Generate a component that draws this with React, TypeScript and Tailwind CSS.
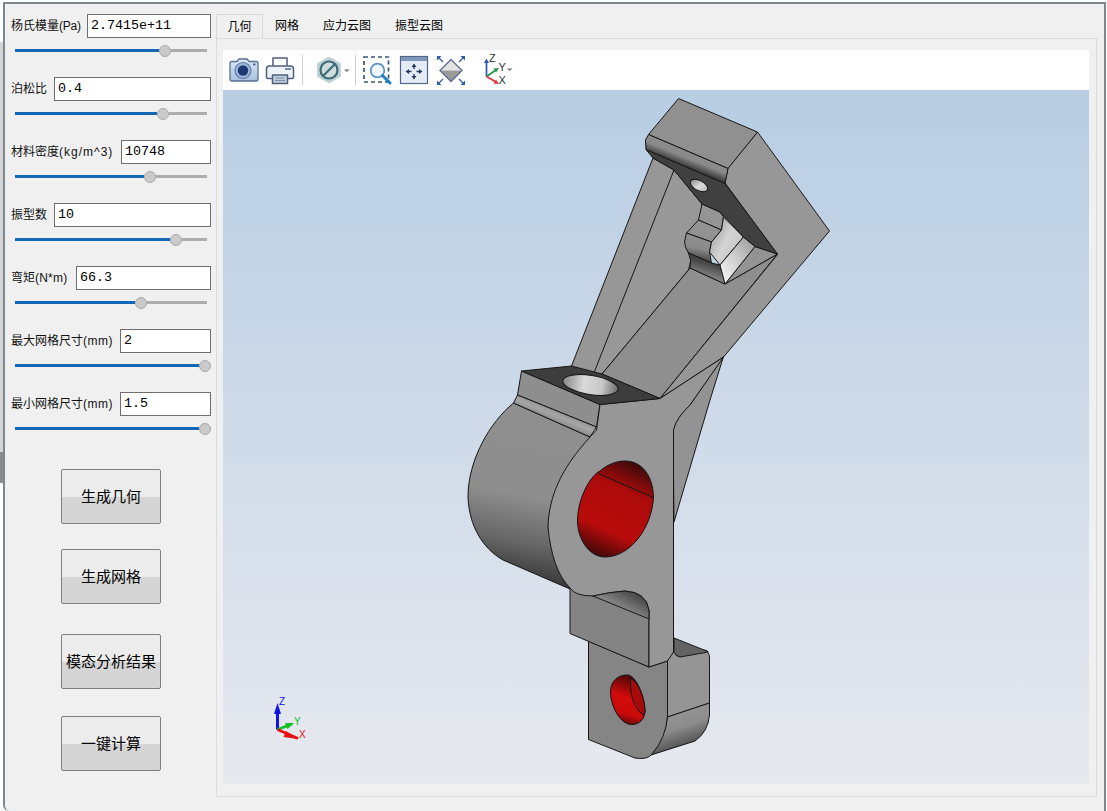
import React from "react";

const CJK = "font-['Liberation_Sans','Noto_Sans_CJK_SC',sans-serif]";

const params = [
  { label: "杨氏模量", unit: "(Pa)", unitCls: "tracking-[-0.2px]", value: "2.7415e+11", labelW: "w-[76px]", pos: 150 },
  { label: "泊松比", unit: "", unitCls: "", value: "0.4", labelW: "w-[43px]", pos: 147.5 },
  { label: "材料密度", unit: "(kg/m^3)", unitCls: "tracking-[1px]", value: "10748", labelW: "w-[110px]", pos: 135 },
  { label: "振型数", unit: "", unitCls: "", value: "10", labelW: "w-[43px]", pos: 161 },
  { label: "弯矩", unit: "(N*m)", unitCls: "tracking-[0.2px]", value: "66.3", labelW: "w-[65px]", pos: 126 },
  { label: "最大网格尺寸", unit: "(mm)", unitCls: "tracking-[0.5px]", value: "2", labelW: "w-[109px]", pos: 190 },
  { label: "最小网格尺寸", unit: "(mm)", unitCls: "tracking-[0.5px]", value: "1.5", labelW: "w-[109px]", pos: 190 },
];

function Param({ label, unit, unitCls, value, labelW, pos }: { label: string; unit: string; unitCls: string; value: string; labelW: string; pos: number }) {
  return (
    <div className="h-[63px]">
      <div className="flex h-6 items-center">
        <span className={`${labelW} shrink-0 whitespace-nowrap text-[12px] leading-none text-[#111] ${CJK}`}>
          {label}
          <span className={unitCls}>{unit}</span>
        </span>
        <div className="flex h-6 flex-1 items-center border border-[#6f6f6f] bg-white pl-[3px] font-['Liberation_Mono',monospace] text-[13.33px] text-black">
          {value}
        </div>
      </div>
      <div className="ml-1 mt-[6px] flex h-[13px] items-center">
        <div className="h-[3px] shrink-0 bg-[#1268b5]" style={{ width: pos - 6 }} />
        <div className="h-3 w-3 shrink-0 rounded-full border border-[#a9a9a9] bg-[#cacaca]" />
        <div className="h-[3px] shrink-0 bg-[#adadad]" style={{ width: Math.max(0, 186 - pos) }} />
      </div>
    </div>
  );
}

function Btn({ text, cls }: { text: string; cls: string }) {
  return (
    <div
      className={`${cls} ml-[56px] flex h-[55px] w-[100px] items-center justify-center rounded-[2px] border border-[#7e7e7e] bg-[linear-gradient(#ececec_0%,#ececec_50%,#d5d5d5_52%,#d5d5d5_100%)] pt-px text-[15px] text-black ${CJK}`}
    >
      {text}
    </div>
  );
}

function Camera() {
  return (
    <svg width="30" height="30" viewBox="0 0 30 30" className="ml-[6px] shrink-0">
      <defs>
        <linearGradient id="cam" x1="0" y1="0" x2="0" y2="1">
          <stop offset="0" stopColor="#dde8f5" />
          <stop offset="1" stopColor="#a9c2df" />
        </linearGradient>
      </defs>
      <path d="M1 8.500Q1 6.500 3 6.500H8L10 4H18L20 6.500H27Q29 6.500 29 8.500V24Q29 26 27 26H3Q1 26 1 24Z" fill="url(#cam)" stroke="#5a6f94" strokeWidth="1.300" />
      <circle cx="14" cy="15.500" r="8" fill="#9db8d8" stroke="#5f7ba6" strokeWidth="1.200" />
      <circle cx="14" cy="15.500" r="5.200" fill="#1d3a70" />
      <rect x="24" y="8.500" width="2.500" height="1.800" fill="#44618f" />
    </svg>
  );
}

function Printer() {
  return (
    <svg width="30" height="30" viewBox="0 0 30 30" className="ml-[6px] shrink-0">
      <path d="M8 12V3H22V12" fill="#fff" stroke="#4e5f7e" strokeWidth="1.500" />
      <path d="M4.500 11H25.500Q28.500 11 28.500 14V22Q28.500 23.500 27 23.500H3Q1.500 23.500 1.500 22V14Q1.500 11 4.500 11Z" fill="#eef3f9" stroke="#4e5f7e" strokeWidth="1.500" />
      <rect x="20" y="13" width="6" height="2" fill="#7a8ca8" />
      <rect x="7.500" y="20" width="15" height="8.500" fill="#c3cedd" stroke="#4e5f7e" strokeWidth="1.500" />
      <path d="M10 23H20M10 25.500H20" stroke="#7f8fa8" strokeWidth="1" />
    </svg>
  );
}

function NoEntry() {
  return (
    <svg width="35" height="30" viewBox="0 0 35 30" className="ml-3 shrink-0">
      <path d="M14 2L25.500 8.500V21.500L14 28L2.500 21.500V8.500Z" fill="#b9ced2" stroke="#c9d8da" strokeWidth="1" />
      <circle cx="14" cy="15" r="8.500" fill="#cfdcde" stroke="#3c6a76" strokeWidth="2.200" />
      <path d="M8 21L20 9" stroke="#3c6a76" strokeWidth="2.200" />
      <path d="M29 14.500H34.500L31.750 17Z" fill="#777" />
    </svg>
  );
}

function ZoomBox() {
  return (
    <svg width="30" height="30" viewBox="0 0 30 30" className="ml-[7px] shrink-0">
      <rect x="1" y="2" width="24.500" height="25" fill="none" stroke="#3d5578" strokeWidth="1.700" strokeDasharray="4 3" />
      <circle cx="14.500" cy="15.500" r="6.800" fill="#eef5fb" stroke="#5c93c4" strokeWidth="1.800" />
      <path d="M19.500 20.500L27 28" stroke="#1f7fc4" strokeWidth="3" strokeLinecap="round" />
    </svg>
  );
}

function FitAll() {
  return (
    <svg width="30" height="30" viewBox="0 0 30 30" className="ml-[6px] shrink-0">
      <rect x="1.500" y="1.500" width="27" height="27" fill="#e3ebf4" stroke="#4f658a" strokeWidth="1.200" />
      <rect x="2" y="2" width="26" height="4" fill="#7f97b8" />
      <path d="M15 11.500V14M15 19V21.500M9.500 16.500H12.500M17.500 16.500H20.500" stroke="#233a62" strokeWidth="1.400" />
      <path d="M15 8.500L12.500 12H17.500ZM15 24.500L12.500 21H17.500ZM6.500 16.500L10 14V19ZM23.500 16.500L20 14V19Z" fill="#233a62" />
    </svg>
  );
}

function Diamond() {
  return (
    <svg width="30" height="30" viewBox="0 0 30 30" className="ml-[7px] shrink-0">
      <path d="M15 4.500L26 15.500H4Z" fill="#e2e2e2" />
      <path d="M4 15.500H26L15 26.500Z" fill="#9b9b9b" />
      <path d="M15 4.500L26 15.500L15 26.500L4 15.500Z" fill="none" stroke="#5c6d8c" strokeWidth="1.300" />
      <path d="M2 2L7 7M28 2L23 7M2 29L7 24M28 29L23 24" stroke="#2f5f9e" strokeWidth="1.300" />
      <path d="M1 1H5.500L1 5.500ZM29 1H24.500L29 5.500ZM1 30H5.500L1 25.500ZM29 30H24.500L29 25.500Z" fill="#2f5f9e" />
    </svg>
  );
}

function Axes() {
  return (
    <svg width="36" height="34" viewBox="0 0 36 34" className="ml-4 shrink-0">
      <path d="M4.500 23.500V9" stroke="#2a56b8" strokeWidth="1.700" />
      <path d="M4.500 5.500L2 10H7Z" fill="#2a56b8" />
      <path d="M4.500 23.500L14 17" stroke="#1f9a4a" strokeWidth="1.700" />
      <path d="M17 15L11.500 15.500L14 19.500Z" fill="#1f9a4a" />
      <path d="M4.500 23.500L14 29" stroke="#e0353a" strokeWidth="1.700" />
      <path d="M17 31L11.500 30.500L14 26.500Z" fill="#e0353a" />
      <text x="7" y="9" fontSize="11" fill="#333" fontFamily="Liberation Sans">Z</text>
      <text x="16.500" y="18" fontSize="11" fill="#333" fontFamily="Liberation Sans">Y</text>
      <text x="16.500" y="31" fontSize="11" fill="#333" fontFamily="Liberation Sans">X</text>
      <path d="M25 15.500H30.500L27.750 18Z" fill="#777" />
    </svg>
  );
}

function Model() {
  const e = { stroke: "#161616", strokeWidth: 1, strokeLinejoin: "round" as const };
  return (
    <svg viewBox="223 90 866 694" width="866" height="694" className="block">
      <defs>
        <linearGradient id="cyl" gradientUnits="userSpaceOnUse" x1="505" y1="425" x2="475" y2="578">
          <stop offset="0" stopColor="#8f8f8f" />
          <stop offset="0.42" stopColor="#8e8e8e" />
          <stop offset="0.72" stopColor="#666" />
          <stop offset="1" stopColor="#2e2e2e" />
        </linearGradient>
        <linearGradient id="band" gradientUnits="userSpaceOnUse" x1="654" y1="136" x2="648" y2="151">
          <stop offset="0" stopColor="#8c8c8c" />
          <stop offset="0.5" stopColor="#8a8a8a" />
          <stop offset="1" stopColor="#3e3e3e" />
        </linearGradient>
        <linearGradient id="fillet" gradientUnits="userSpaceOnUse" x1="526" y1="396" x2="521" y2="408">
          <stop offset="0" stopColor="#8e8e8e" />
          <stop offset="0.5" stopColor="#a6a6a6" />
          <stop offset="1" stopColor="#8c8c8c" />
        </linearGradient>
        <linearGradient id="holeBig" gradientUnits="userSpaceOnUse" x1="640" y1="462" x2="595" y2="560">
          <stop offset="0" stopColor="#300a0a" />
          <stop offset="0.3" stopColor="#ad0b0b" />
          <stop offset="0.7" stopColor="#b90b0b" />
          <stop offset="1" stopColor="#2c0808" />
        </linearGradient>
        <linearGradient id="holeSmall" gradientUnits="userSpaceOnUse" x1="635" y1="675" x2="620" y2="726">
          <stop offset="0" stopColor="#3d0808" />
          <stop offset="0.45" stopColor="#d50a0a" />
          <stop offset="0.75" stopColor="#c90a0a" />
          <stop offset="1" stopColor="#3a0808" />
        </linearGradient>
        <linearGradient id="tail" gradientUnits="userSpaceOnUse" x1="680" y1="705" x2="695" y2="750">
          <stop offset="0" stopColor="#979797" />
          <stop offset="0.45" stopColor="#8c8c8c" />
          <stop offset="1" stopColor="#3d3d3d" />
        </linearGradient>
        <linearGradient id="notch" gradientUnits="userSpaceOnUse" x1="630" y1="590" x2="618" y2="612">
          <stop offset="0" stopColor="#454545" />
          <stop offset="1" stopColor="#969696" />
        </linearGradient>
        <linearGradient id="hole1" gradientUnits="userSpaceOnUse" x1="565" y1="385" x2="618" y2="385">
          <stop offset="0" stopColor="#8f8f8f" />
          <stop offset="0.35" stopColor="#d9d9d9" />
          <stop offset="0.7" stopColor="#c8c8c8" />
          <stop offset="1" stopColor="#6b6b6b" />
        </linearGradient>
        <linearGradient id="hole2" gradientUnits="userSpaceOnUse" x1="690" y1="182" x2="708" y2="192">
          <stop offset="0" stopColor="#888" />
          <stop offset="0.5" stopColor="#dcdcdc" />
          <stop offset="1" stopColor="#aaa" />
        </linearGradient>
        <linearGradient id="lite" gradientUnits="userSpaceOnUse" x1="708" y1="240" x2="738" y2="255">
          <stop offset="0" stopColor="#a8a8a8" />
          <stop offset="0.5" stopColor="#d4d4d4" />
          <stop offset="1" stopColor="#c4c4c4" />
        </linearGradient>
        <linearGradient id="lite2" gradientUnits="userSpaceOnUse" x1="722" y1="270" x2="752" y2="250">
          <stop offset="0" stopColor="#ececec" />
          <stop offset="0.55" stopColor="#cacaca" />
          <stop offset="1" stopColor="#a8a8a8" />
        </linearGradient>
        <linearGradient id="blk" gradientUnits="userSpaceOnUse" x1="695" y1="235" x2="690" y2="260">
          <stop offset="0" stopColor="#8f8f8f" />
          <stop offset="0.5" stopColor="#8a8a8a" />
          <stop offset="1" stopColor="#3c3c3c" />
        </linearGradient>
        <linearGradient id="blk2" gradientUnits="userSpaceOnUse" x1="705" y1="262" x2="700" y2="280">
          <stop offset="0" stopColor="#444" />
          <stop offset="1" stopColor="#999" />
        </linearGradient>
      </defs>

      {/* right rib behind main body */}
      <path d="M723.500 356.500L710 400L674 522L673 430Q676 418 690 405Z" fill="#939393" {...e} />

      {/* tail block */}
      <path d="M667 661L673 650L680 656L704 650Q709 651 709.500 657V703L667.500 717Z" fill="#959595" {...e} />
      <path d="M674 638L704 650Q709 651 708 652L680 657Q675 656 674 652Z" fill="#636363" {...e} />
      <path d="M667.500 717L709.500 703V715Q708 732 695 741L651 755Q664 740 667.500 717Z" fill="url(#tail)" {...e} />
      <path d="M588.500 641V739.500L635 758Q648 760 652 754Q666 738 667.500 716V661L649 667Z" fill="#858585" {...e} />
      <path d="M627 675C635 674 645 695 645 712C644 722 636 726 628 724C617 720 610 702 610.500 691C611 680 619 675 627 675Z" fill="url(#holeSmall)" {...e} />
      <path d="M630.500 678C640 684 645 700 645 712L643.500 715C633 708 630 695 630.500 678Z" fill="#a80909" {...e} />

      {/* under block */}
      <path d="M570 586V633.500L649 667V610L593 596Z" fill="#848484" {...e} />

      {/* cylinder */}
      <path d="M513.500 403C490 422 468 460 468 497C469 525 482 548 503 560L570 589L548 527L590 437Z" fill="url(#cyl)" {...e} />

      {/* top band */}
      <path d="M521.500 371L517.500 395L596.500 427L600 404.500Z" fill="#8e8e8e" {...e} />
      <path d="M517.500 395L513.500 403L590 437L596.500 427Z" fill="url(#fillet)" {...e} />

      {/* upper arm: ribs */}
      <path d="M653 158L571.500 366L600 404L674 170Z" fill="#979797" {...e} />
      <path d="M674 170L593.500 374L602 374L688.500 270L692 256L685 242L702 215L702 204Z" fill="#989898" {...e} />
      <path d="M602 374L660 398.500L777.500 254L725 284L690 268L688.500 270Z" fill="#8f8f8f" {...e} />
      <path d="M725 284L755 246.500L777.500 254Z" fill="#939393" {...e} />

      {/* right face */}
      <path d="M757.500 132L829.500 231L723.500 357L660 398.500L777.500 254.500L725 183L728 168Z" fill="#979797" {...e} />

      {/* main front face */}
      <path d="M600 404.500L660 398.500L723.500 357L690 405Q676 418 673.500 430V652L667.500 661L649 667V610Q646 592 625 591Q610 592 593 596Q575 596 570 588Q552 570 548 527C549 495 562 470 583 445L590 437L596.500 430Z" fill="#979797" {...e} />
      <path d="M593 596Q610 592 625 591Q646 592 649 610V619Z" fill="url(#notch)" {...e} />
      <path d="M673.500 430V652" fill="none" {...e} />

      {/* big hole */}
      <path d="M625 461C642 461 653 476 653.500 497C652 528 630 557 605 557C588 557 577 537 577.500 520C578 498 590 476 600 471C608 464 617 461 625 461Z" fill="url(#holeBig)" {...e} />
      <path d="M598.500 473.500L653.500 497.500" fill="none" {...e} />

      {/* pocket */}
      <path d="M702 204L698.500 220L721.500 230L723.500 217L720 212Z" fill="#959595" {...e} />
      <path d="M698.500 220L686.500 233L711.500 242L721.500 230Z" fill="#929292" {...e} />
      <path d="M686.500 233L684.500 242Q685 248 688.500 253L711.500 263L709.500 252L711.500 242Z" fill="url(#blk)" {...e} />
      <path d="M688.500 253Q692 260 690 268L725 284Q723 272 720 265L711.500 263Z" fill="url(#blk2)" {...e} />
      <path d="M721.500 230L711.500 242L709.500 252L720 265L743.500 237L723.500 217Z" fill="url(#lite)" {...e} />
      <path d="M720 265L725 284L755 246.500L743.500 237Z" fill="url(#lite2)" {...e} />

      {/* dark wedge */}
      <path d="M646 149.500L653 158L674 170L702 204L720 212L743.500 237L755 246.500L777.500 254L725 183.500Z" fill="#404040" {...e} />
      <ellipse cx="699" cy="185.500" rx="9.500" ry="5" transform="rotate(28 699 185.500)" fill="url(#hole2)" {...e} />

      {/* top */}
      <path d="M678.500 98.500L757.500 132L728 168.500L648.500 134.500Z" fill="#909090" {...e} />
      <path d="M648.500 134.500L728 168.500L725 183.500L646 149.500L645.500 140Z" fill="url(#band)" {...e} />

      {/* dark bottom seat */}
      <path d="M521.500 371L571.500 366L602 374L660 398.500L600 404.500Z" fill="#3d3d3d" {...e} />
      <ellipse cx="590.500" cy="385" rx="28" ry="9.500" transform="rotate(9 590.500 385)" fill="url(#hole1)" {...e} />

      {/* triad */}
      <path d="M277.500 729.500V708" stroke="#1010e8" strokeWidth="3" />
      <path d="M277.500 703L274 714H281Z" fill="#1010e8" />
      <path d="M277.500 729.500L292 724" stroke="#10c020" strokeWidth="2.500" />
      <path d="M294 723L285 723L287.500 729Z" fill="#10c020" />
      <path d="M277.500 729.500L298 738.500" stroke="#e81010" strokeWidth="3" />
      <path d="M298 739L286 731L283.500 737Z" fill="#e81010" />
      <text x="279" y="705" fontSize="10" fill="#1010e8" fontFamily="Liberation Sans">Z</text>
      <text x="294" y="725" fontSize="10" fill="#10c020" fontFamily="Liberation Sans">Y</text>
      <text x="299" y="738" fontSize="10" fill="#e81010" fontFamily="Liberation Sans">X</text>
    </svg>
  );
}

export default function App() {
  const tabs = ["网格", "应力云图", "振型云图"];
  return (
    <div className="flex h-[811px] w-[1107px] overflow-hidden bg-white">
      <div className="flex w-[3px] shrink-0 flex-col bg-white">
        <div className="h-[42px]" />
        <div className="h-[410px] bg-[#d4d4d4]" />
        <div className="h-[31px] bg-[#8c8c8c]" />
      </div>
      <div className="mt-[2px] flex h-[809px] w-[1103px] rounded-bl-[6px] border-2 border-b-0 border-[#7d8790] bg-[#f0f0f0]">
        <div className="w-[211px] shrink-0 pl-[6px] pr-[5px] pt-[10px]">
          {params.map((p) => (
            <Param key={p.label} {...p} />
          ))}
          <div className="-ml-[6px] pt-[14px]">
            <Btn text="生成几何" cls="" />
            <Btn text="生成网格" cls="mt-[25px]" />
            <Btn text="模态分析结果" cls="mt-[30px]" />
            <Btn text="一键计算" cls="mt-[27px]" />
          </div>
        </div>
        <div className="flex w-[881px] shrink-0 flex-col pt-[10px]">
          <div className={`flex h-6 text-[12px] text-black ${CJK}`}>
            <div className="flex h-[25px] w-[47px] items-center justify-center border border-b-0 border-[#d9d9d9] bg-[#f0f0f0]">几何</div>
            {tabs.map((t) => (
              <div key={t} className="flex items-center px-3">{t}</div>
            ))}
          </div>
          <div className="h-[759px] border border-[#dcdcdc] pl-[6px] pt-[11px]">
            <div className="flex h-10 w-[866px] items-center bg-white">
              <Camera />
              <Printer />
              <div className="ml-[7px] h-[30px] w-px bg-[#d0d0d0]" />
              <NoEntry />
              <div className="ml-[5px] h-[30px] w-px bg-[#d0d0d0]" />
              <ZoomBox />
              <FitAll />
              <Diamond />
              <Axes />
            </div>
            <div className="h-[694px] w-[866px] bg-[linear-gradient(#b8cde3,#e7e9ef)]">
              <Model />
            </div>
          </div>
        </div>
      </div>
    </div>
  );
}
